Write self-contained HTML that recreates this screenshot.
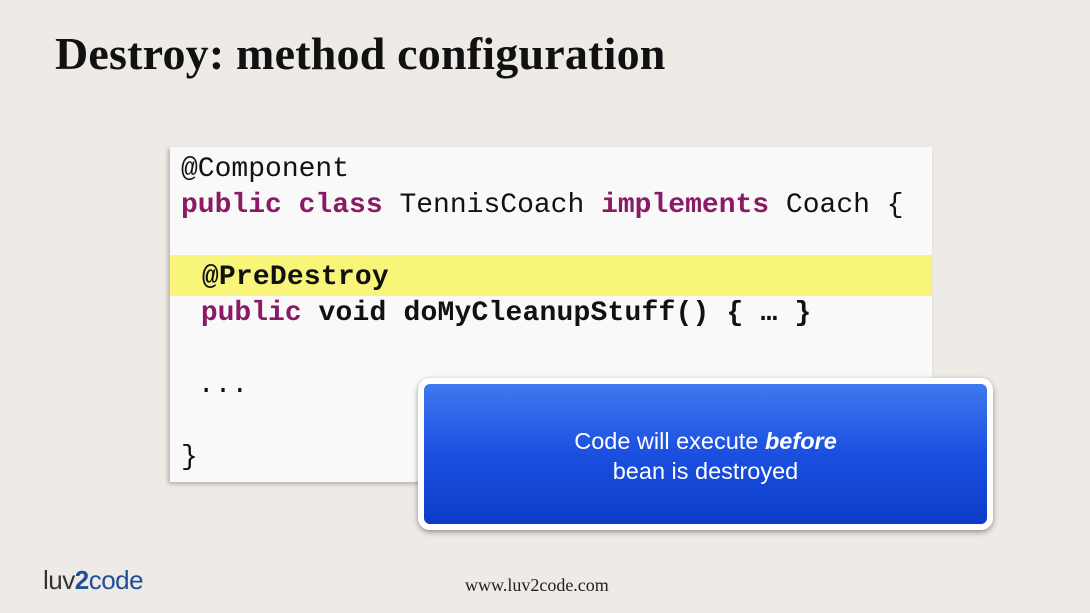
<!DOCTYPE html>
<html><head><style>
body{margin:0;width:1090px;height:613px;overflow:hidden;background:#eeeae6;position:relative;font-family:"Liberation Sans",sans-serif}
.title{position:absolute;left:55px;top:27px;font-family:"Liberation Serif",serif;font-weight:bold;font-size:46px;color:#111;letter-spacing:0.2px}
.code{position:absolute;left:170px;top:147px;width:762px;height:335px;background:#f9f9f9;box-shadow:-2px 2px 4px rgba(0,0,0,.25)}
.hl{position:absolute;left:0;top:108px;width:762px;height:41px;background:#f8f57a}
.lines{position:absolute;left:11px;top:5px;font-family:"Liberation Mono",monospace;font-size:28px;line-height:36px;color:#111;white-space:pre}
.k{color:#8a1a63;font-weight:bold}
.b{font-weight:bold;letter-spacing:0.2px}
.blue{position:absolute;left:418px;top:378px;width:563px;height:140px;border:6px solid #fff;border-radius:12px;background:linear-gradient(#3f78ef,#1a4fe0 50%,#0d3cc7);box-shadow:0 2px 6px rgba(0,0,0,.4);color:#fff;font-size:23.5px;text-align:center;line-height:30px;box-sizing:content-box}
.blue div{padding-top:42px}
.url{position:absolute;left:465px;top:575px;font-family:"Liberation Serif",serif;font-size:18px;color:#222}
.logo{position:absolute;left:43px;top:565px;font-size:26px;color:#333;letter-spacing:-0.5px}
</style></head><body>
<div class="title">Destroy: method configuration</div>
<div class="code"><div class="hl"></div><div class="lines">@Component
<span class="k">public class</span> TennisCoach <span class="k">implements</span> Coach {

 <span class="b" style="margin-left:4px">@PreDestroy</span>
 <span class="k" style="margin-left:3px">public</span> <span class="b">void doMyCleanupStuff() { … }</span>

 ...

}</div></div>
<div class="blue"><div>Code will execute <b><i>before</i></b><br>bean is destroyed</div></div>
<div class="logo">luv<span style="color:#1f4f9a;font-weight:bold">2</span><span style="color:#1f4f9a">code</span></div>
<div class="url">www.luv2code.com</div>
</body></html>
